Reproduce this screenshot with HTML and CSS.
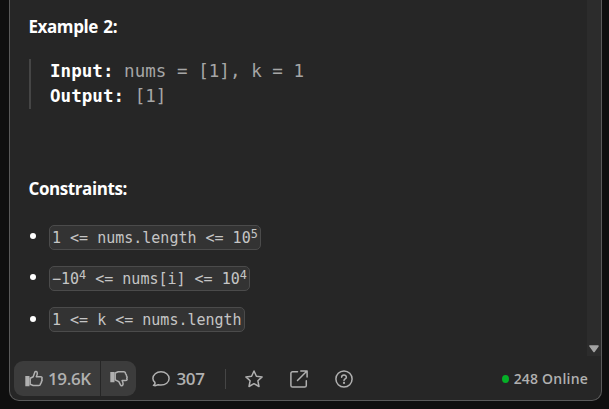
FILE: index.html
```
<!DOCTYPE html>
<html lang="en">
<head>
<meta charset="utf-8">
<title>Problem description</title>
<link rel="stylesheet" href="styles.css">
</head>
<body>
<main class="panel">
  <div class="scroller">
    <section class="content">
      <h2 class="heading">Example 2:</h2>
      <pre class="example"><b>Input:</b> nums = [1], k = 1
<b>Output:</b> [1]</pre>
      <h2 class="heading">Constraints:</h2>
      <ul class="constraints">
        <li><code>1 &lt;= nums.length &lt;= 10<sup>5</sup></code></li>
        <li><code>−10<sup>4</sup> &lt;= nums[i] &lt;= 10<sup>4</sup></code></li>
        <li><code>1 &lt;= k &lt;= nums.length</code></li>
      </ul>
    </section>
    <div class="scrollbar"><svg width="12" height="8" viewBox="0 0 12 8"><path d="M2 1h8L6 6.500z" fill="#a3a3a3" stroke="#a3a3a3" stroke-width="1.6" stroke-linejoin="round"/></svg></div>
  </div>
  <footer class="footer">
    <div class="votes">
      <button class="vote up">
        <svg class="icon" viewBox="0 0 18 18"><path class="solid" d="M.3 6h4.2v10.2H.3z"/><path d="M5.2 8.2 8.2 6.8 9.8 2.2c.4-1.2 2.5-.8 2.5 1 0 1.3-.6 2.5-1 3.5h4.2c1.5 0 2 1.2 1.2 2.3.6.9.4 1.8-.3 2.3.3 1-.1 1.8-.9 2.2.1 1.3-.7 2-1.9 2H8.2l-3-1.2z"/></svg>
        <span class="count">19.6K</span>
      </button>
      <button class="vote down">
        <svg class="icon" viewBox="0 0 18 18"><path class="solid" d="M.3 2h4.2v10.2H.3z"/><path d="M5.2 3 8.2 1.8h5.4c1.2 0 2 .7 1.9 2 .8.4 1.2 1.2.9 2.2.7.5.9 1.4.3 2.3.8 1.1.3 2.3-1.2 2.3h-3.4c.4 1 1 2.2 1 3.5 0 1.8-2.1 2.2-2.5 1L8.8 11.600 5.200 9.800z"/></svg>
      </button>
    </div>
    <div class="comments">
      <svg class="icon" viewBox="0 0 18 18"><path d="M1.400 15.400c1.400-.7 1.900-1.600 1.500-3C1.600 11.300.9 10 .9 8.500c0-3.800 3.600-6.700 8.100-6.700s8.100 2.900 8.100 6.700-3.600 6.600-8.100 6.600c-1 0-1.900-.1-2.700-.4-1.400.8-3.100 1.200-4.900.7z"/></svg>
      <span class="count">307</span>
    </div>
    <span class="divider"></span>
    <svg class="icon star" viewBox="0 0 18 18"><path d="M9 1l2.400 5.200 5.700.7-4.200 3.900 1.100 5.700L9 13.700l-5 2.800 1.100-5.700L.9 6.900l5.700-.7z"/></svg>
    <svg class="icon share" viewBox="0 0 18 18"><path d="M7.500 1.800H2.600C1.500 1.800.9 2.400.9 3.500v12c0 1 .6 1.600 1.700 1.600h12c1.100 0 1.700-.6 1.700-1.700v-4.700M10.800.9h6.300v6M16.700 1.300 7.500 10.500"/></svg>
    <svg class="icon help" viewBox="0 0 18 18"><circle cx="9" cy="9" r="8.100"/><path d="M6.600 7.200c0-3 4.800-3 4.800 0 0 1.700-2.400 1.700-2.400 3.300"/><circle class="solid" cx="9" cy="12.900" r="1.100"/></svg>
    <div class="online"><span class="dot"></span><span class="label">248 Online</span></div>
  </footer>
</main>
</body>
</html>
```

FILE: styles.css
```
* { box-sizing: border-box; }
body {
  margin: 0;
  height: 409px;
  overflow: hidden;
  background: #0f0f0f;
  color: #fff;
  font-family: "Open Sans", sans-serif;
}
.panel {
  width: 593px;
  height: 401px;
  margin-left: 9px;
  background: #262626;
  border: 1px solid #5a5a5a;
  border-top: 0;
  border-radius: 0 0 10px 10px;
  overflow: hidden;
}
.scroller { display: flex; height: 356px; }
.content { flex: 1; padding: 15px 0 0 19px; }
.heading {
  margin: 0 0 0 -.5px;
  height: 24px;
  font-size: 17px;
  line-height: 24px;
  font-weight: 700;
  letter-spacing: -.42px;
  word-spacing: 1.500px;
}
.example {
  margin: 20px 0 68px;
  height: 50px;
  padding-left: 19px;
  border-left: 2px solid #454545;
  font: 17.5px/25px "DejaVu Sans Mono", monospace;
  letter-spacing: .05px;
  color: #a6a6a6;
}
.example b { color: #fff; }
.constraints {
  list-style: none;
  margin: 23px 0 0;
  padding: 0;
}
.constraints li {
  display: flex;
  align-items: center;
  height: 26px;
  margin-bottom: 15.300px;
}
.constraints li::before {
  content: "";
  width: 6px;
  height: 6px;
  margin: 0 13px 2px 1px;
  border-radius: 50%;
  background: #fff;
}
.constraints code {
  height: 25px;
  padding: 0 2px;
  border: 1px solid #4b4b4b;
  border-radius: 5px;
  background: #333;
  color: #c5c5c5;
  font: 15px/24px "DejaVu Sans Mono", monospace;
  white-space: pre;
}
.constraints sup {
  font-size: 11.800px;
  line-height: 0;
  vertical-align: baseline;
  position: relative;
  top: -5px;
}
.scrollbar {
  display: flex;
  align-items: flex-end;
  justify-content: center;
  width: 14px;
  padding-bottom: 3px;
  background: #2c2c2c;
}
.footer {
  display: flex;
  align-items: center;
  height: 45px;
  padding: 0 13px 0 4px;
  color: #b0b0b0;
}
.votes { display: flex; gap: 1px; height: 35px; }
.vote {
  display: flex;
  align-items: center;
  gap: 5px;
  border: 0;
  padding: 0;
  background: #3c3c3c;
  color: inherit;
  font-family: inherit;
}
.up { width: 86px; padding-left: 11px; border-radius: 9px 0 0 9px; }
.down { width: 35px; padding-left: 9px; border-radius: 0 9px 9px 0; }
.icon {
  flex: none;
  width: 18px;
  height: 18px;
  fill: none;
  stroke: #b0b0b0;
  stroke-width: 1.500;
  stroke-linejoin: round;
  stroke-linecap: round;
}
.icon .solid { fill: #b0b0b0; stroke: none; }
.count { font-size: 17px; line-height: 24px; font-weight: 600; letter-spacing: -.4px; }
.comments { display: flex; align-items: center; gap: 6.500px; width: 73px; margin-left: 16px; }
.divider { width: 1px; height: 20px; background: #454545; }
.star { margin-left: 19px; }
.share { margin-left: 27px; }
.help { margin-left: 27px; }
.online { display: flex; align-items: center; gap: 5px; margin-left: auto; }
.dot { width: 7px; height: 8px; border-radius: 50%; background: #05b027; }
.label { font-size: 14px; line-height: 20px; font-weight: 600; letter-spacing: .2px; white-space: nowrap; }
```
